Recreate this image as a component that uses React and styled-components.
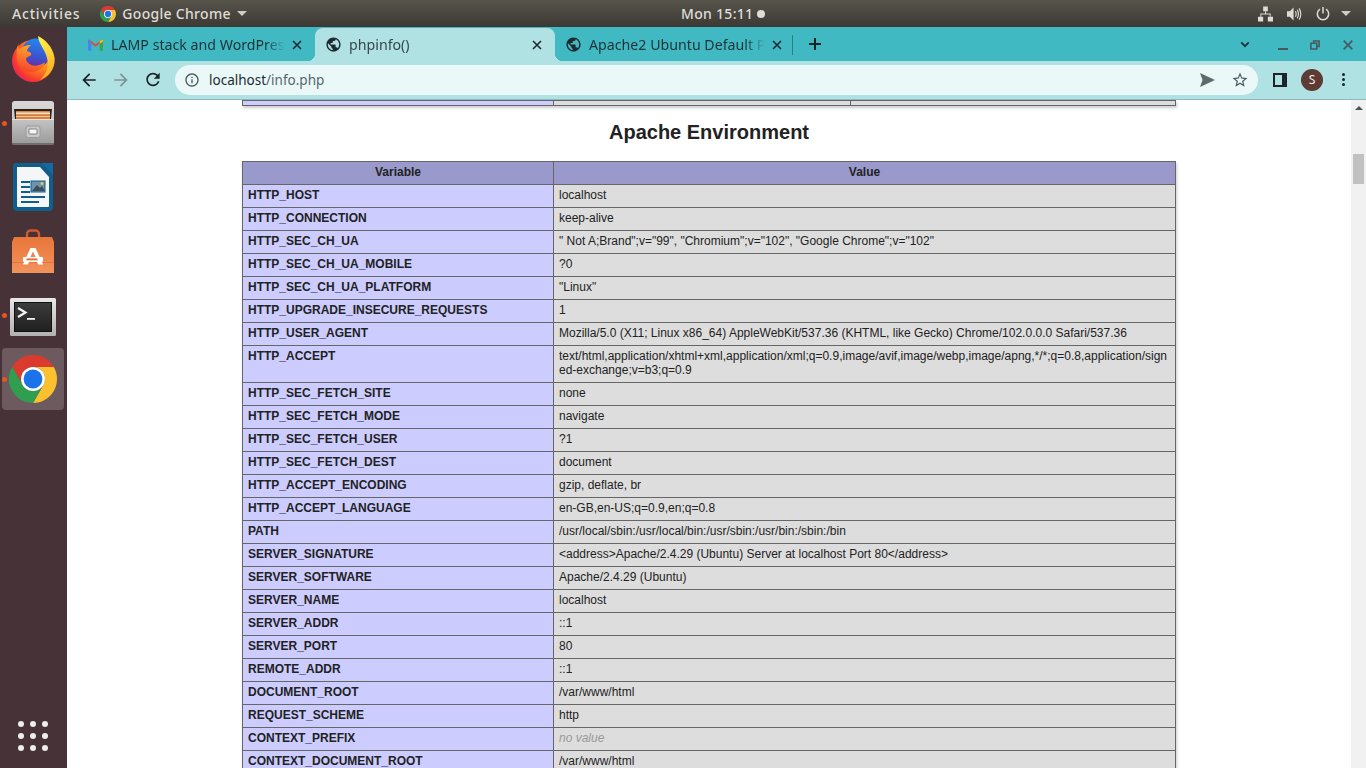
import React from 'react'
import styled, { createGlobalStyle } from 'styled-components'

const UI_FONT = '"Noto Sans", "Open Sans", sans-serif'

const rows = [
  ['HTTP_HOST', 'localhost'],
  ['HTTP_CONNECTION', 'keep-alive'],
  ['HTTP_SEC_CH_UA', '" Not A;Brand";v="99", "Chromium";v="102", "Google Chrome";v="102"'],
  ['HTTP_SEC_CH_UA_MOBILE', '?0'],
  ['HTTP_SEC_CH_UA_PLATFORM', '"Linux"'],
  ['HTTP_UPGRADE_INSECURE_REQUESTS', '1'],
  ['HTTP_USER_AGENT', 'Mozilla/5.0 (X11; Linux x86_64) AppleWebKit/537.36 (KHTML, like Gecko) Chrome/102.0.0.0 Safari/537.36'],
  ['HTTP_ACCEPT', 'text/html,application/xhtml+xml,application/xml;q=0.9,image/avif,image/webp,image/apng,*/*;q=0.8,application/signed-exchange;v=b3;q=0.9'],
  ['HTTP_SEC_FETCH_SITE', 'none'],
  ['HTTP_SEC_FETCH_MODE', 'navigate'],
  ['HTTP_SEC_FETCH_USER', '?1'],
  ['HTTP_SEC_FETCH_DEST', 'document'],
  ['HTTP_ACCEPT_ENCODING', 'gzip, deflate, br'],
  ['HTTP_ACCEPT_LANGUAGE', 'en-GB,en-US;q=0.9,en;q=0.8'],
  ['PATH', '/usr/local/sbin:/usr/local/bin:/usr/sbin:/usr/bin:/sbin:/bin'],
  ['SERVER_SIGNATURE', '<address>Apache/2.4.29 (Ubuntu) Server at localhost Port 80</address>'],
  ['SERVER_SOFTWARE', 'Apache/2.4.29 (Ubuntu)'],
  ['SERVER_NAME', 'localhost'],
  ['SERVER_ADDR', '::1'],
  ['SERVER_PORT', '80'],
  ['REMOTE_ADDR', '::1'],
  ['DOCUMENT_ROOT', '/var/www/html'],
  ['REQUEST_SCHEME', 'http'],
  ['CONTEXT_PREFIX', null],
  ['CONTEXT_DOCUMENT_ROOT', '/var/www/html'],
]

const GLOBE = 'M12 2C6.48 2 2 6.48 2 12s4.48 10 10 10 10-4.48 10-10S17.52 2 12 2zm-1 17.93c-3.95-.49-7-3.85-7-7.93 0-.62.08-1.21.21-1.79L9 15v1c0 1.1.9 2 2 2v1.93zm6.9-2.54c-.26-.81-1-1.39-1.9-1.39h-1v-3c0-.55-.45-1-1-1H8v-2h2c.55 0 1-.45 1-1V7h2c1.1 0 2-.9 2-2v-.41c2.93 1.19 5 4.06 5 7.41 0 2.08-.8 3.97-2.1 5.39z'

function Glyph({ d, size = 20, color = '#202124', flip }) {
  return (
    <svg width={size} height={size} viewBox="0 0 24 24" fill={color} style={flip ? { transform: 'scaleX(-1)' } : undefined}>
      <path d={d} />
    </svg>
  )
}

function ChromeLogo({ size }) {
  return (
    <svg width={size} height={size} viewBox="0 0 48 48">
      <path fill="#db3a2e" d="M44.78 12A24 24 0 0 0 3.2 12L13.6 30A12 12 0 0 1 24 12Z" />
      <path fill="#fbc02d" d="M44.78 12H24A12 12 0 0 1 34.4 30L24 48A24 24 0 0 0 44.78 12Z" />
      <path fill="#2f9e4f" d="M3.2 12A24 24 0 0 0 24 48L34.4 30A12 12 0 0 1 13.6 30Z" />
      <circle cx="24" cy="24" r="12" fill="#fff" />
      <circle cx="24" cy="24" r="9.4" fill="#1a73e8" />
    </svg>
  )
}

function FirefoxLogo() {
  return (
    <svg width="44" height="46" viewBox="0 0 44 46">
      <defs>
        <radialGradient id="ffBody" cx="0.72" cy="0.3" r="0.85">
          <stop offset="0" stopColor="#ffd02c" />
          <stop offset="0.45" stopColor="#ff8a1e" />
          <stop offset="0.8" stopColor="#f8382e" />
          <stop offset="1" stopColor="#e31b76" />
        </radialGradient>
        <linearGradient id="ffGlobe" x1="0.6" y1="0" x2="0.4" y2="1">
          <stop offset="0" stopColor="#1f8bf0" />
          <stop offset="0.6" stopColor="#3b55d0" />
          <stop offset="1" stopColor="#6a2aa5" />
        </linearGradient>
        <linearGradient id="ffTail" x1="0.4" y1="0" x2="0.6" y2="1">
          <stop offset="0" stopColor="#fff04a" />
          <stop offset="1" stopColor="#ffa61f" />
        </linearGradient>
        <linearGradient id="ffHead" x1="0.5" y1="0" x2="0.2" y2="1">
          <stop offset="0" stopColor="#ffb52a" />
          <stop offset="1" stopColor="#f5402c" />
        </linearGradient>
      </defs>
      <circle cx="22" cy="25" r="21" fill="url(#ffBody)" />
      <circle cx="25" cy="17" r="14.5" fill="url(#ffGlobe)" />
      <path fill="url(#ffTail)" d="M27 0C33 3 42 10 43.6 22 44.5 32 38 41 29 44 36 37 38 30 36 22 34 13 28 9 27 0Z" />
      <path fill="url(#ffHead)" d="M8 6C7 9 7 11 8 13 11 11 15 9 20 9 18 11 16 13 16 15 19 16 21 17 20 19 18 21 15 21 15 23 16 28 22 31 28 29 31 28 33 27 34 26 33 31 28 36 20 36 13 36 7 31 6 24 5 17 6 11 8 6Z" />
    </svg>
  )
}

function FilesIcon() {
  return (
    <svg width="42" height="44" viewBox="0 0 42 44">
      <defs>
        <linearGradient id="cabTop" x1="0" y1="0" x2="0" y2="1">
          <stop offset="0" stopColor="#d8d8d8" />
          <stop offset="1" stopColor="#b4b4b4" />
        </linearGradient>
        <linearGradient id="cabFront" x1="0" y1="0" x2="0" y2="1">
          <stop offset="0" stopColor="#c4c4c4" />
          <stop offset="1" stopColor="#9c9c9c" />
        </linearGradient>
      </defs>
      <rect x="0" y="0" width="42" height="43" rx="3" fill="url(#cabTop)" />
      <rect x="0" y="41" width="42" height="3" rx="1.5" fill="#6f6f6f" />
      <path fill="#26211e" d="M2 8H40L39 18H3Z" />
      <rect x="4" y="10" width="34" height="8" fill="#d8813d" />
      <rect x="4" y="11.5" width="34" height="1.6" fill="#f6e6cf" />
      <rect x="4" y="15" width="34" height="1" fill="#f2c290" />
      <rect x="0" y="18" width="42" height="24" fill="url(#cabFront)" />
      <rect x="0" y="18" width="42" height="1" fill="#e2e2e2" />
      <rect x="14" y="25" width="14" height="11.5" rx="2" fill="#c9c9c9" stroke="#9a9a9a" />
      <rect x="17" y="28" width="8" height="5" rx="0.8" fill="#f6f6f6" stroke="#5a5a5a" strokeWidth="0.7" />
    </svg>
  )
}

function WriterIcon() {
  return (
    <svg width="40" height="48" viewBox="0 0 40 48">
      <path fill="#0f5e8e" d="M3 0H28L40 12V44a4 4 0 0 1-4 4H4a4 4 0 0 1-4-4V3a3 3 0 0 1 3-3Z" />
      <path fill="#f4f6f8" d="M4 4H27L36 14V43a1 1 0 0 1-1 1H5a1 1 0 0 1-1-1Z" />
      <path fill="#116ba0" d="M28 0H40V12Z" />
      <path fill="#0f5e8e" d="M8 18h9v2H8zM8 23h9v2H8zM8 28h9v2H8zM8 33h24v2H8zM8 38h18v2H8z" />
      <rect x="18" y="18" width="14" height="11" fill="#6f93ae" stroke="#0f5e8e" />
      <path fill="#3b4e5a" d="M19 28l5-6 3 3 2-2 3 5Z" />
      <circle cx="29" cy="20.5" r="1.5" fill="#f1c84b" />
    </svg>
  )
}

function SoftwareIcon() {
  return (
    <svg width="42" height="44" viewBox="0 0 42 44">
      <defs>
        <linearGradient id="bag" x1="0" y1="0" x2="0" y2="1">
          <stop offset="0" stopColor="#e8763a" />
          <stop offset="1" stopColor="#f2935c" />
        </linearGradient>
      </defs>
      <path fill="none" stroke="#cf5a2b" strokeWidth="2.4" d="M15 13V5a3.5 3.5 0 0 1 3.5-3.5h5A3.5 3.5 0 0 1 27 5v8" />
      <path fill="url(#bag)" d="M2 8H40L42 13V44H0V13Z" />
      <path fill="#d65c2b" d="M0 33H42V34H0Z" opacity="0.45" />
      <path fill="#fff" d="M18.5 19H23.5L29.5 32H25.5L21 22.5 16.5 32H12.5Z" />
      <rect x="11" y="28" width="20" height="5" rx="1" fill="#fff" />
      <rect x="14.5" y="29.4" width="11" height="2" fill="#e8703a" />
      <path fill="#fff" d="M12 33h5l-1.2 2.5H11ZM25 33h5l1 2.5h-4.8Z" />
    </svg>
  )
}

function TerminalIcon() {
  return (
    <svg width="46" height="42" viewBox="0 0 46 42">
      <defs>
        <linearGradient id="termFrame" x1="0" y1="0" x2="0" y2="1">
          <stop offset="0" stopColor="#e8e8e8" />
          <stop offset="1" stopColor="#b0b0b0" />
        </linearGradient>
        <linearGradient id="termScreen" x1="0" y1="0" x2="0" y2="1">
          <stop offset="0" stopColor="#3c3c3c" />
          <stop offset="1" stopColor="#1f1f1f" />
        </linearGradient>
      </defs>
      <rect y="4" width="46" height="38" rx="1.5" fill="url(#termFrame)" />
      <rect x="4.5" y="8.5" width="37" height="29" fill="url(#termScreen)" stroke="#111" />
      <path d="M8 14l7.5 4.5L8 23" fill="none" stroke="#f2f2f2" strokeWidth="2.2" />
      <path fill="#f2f2f2" d="M17 24h8v1.8h-8z" />
    </svg>
  )
}

function GmailIcon() {
  return (
    <svg width="15" height="12" viewBox="0 0 16 12">
      <path fill="#4285f4" d="M0 1.2V12h3.6V4.4L1.8 0.6A1.1 1.1 0 0 0 0 1.2Z" />
      <path fill="#34a853" d="M16 1.2V12h-3.6V4.4L14.2 0.6A1.1 1.1 0 0 1 16 1.2Z" />
      <path fill="#ea4335" d="M1.2 0.2L8 5.4 14.8 0.2 12.4 4.4 8 7.8 3.6 4.4Z" />
      <path fill="#fbbc04" d="M12.4 2.1L14.4 0.4A1 1 0 0 1 16 1.2V2.2L12.4 4.9Z" />
    </svg>
  )
}

const tabs = [
  { id: 'gmail', title: 'LAMP stack and WordPress', icon: <GmailIcon /> },
  { id: 'info', title: 'phpinfo()', active: true },
  { id: 'apache', title: 'Apache2 Ubuntu Default Page: It works' },
]

const dockApps = [
  { id: 'firefox', icon: <FirefoxLogo /> },
  { id: 'files', icon: <FilesIcon />, running: true },
  { id: 'writer', icon: <WriterIcon /> },
  { id: 'software', icon: <SoftwareIcon /> },
  { id: 'terminal', icon: <TerminalIcon />, running: true },
  { id: 'chrome', icon: <ChromeLogo size={48} />, running: true, active: true },
]

export default function App() {
  return (
    <Desktop>
      <GlobalStyle />
      <TopBar>
        <TopLeft>
          <ActivitiesLabel>Activities</ActivitiesLabel>
          <AppMenu>
            <ChromeLogo size={16} />
            <TopLabel>Google Chrome</TopLabel>
            <Caret />
          </AppMenu>
        </TopLeft>
        <Clock>
          Mon 15:11
          <ClockDot />
        </Clock>
        <Tray>
          <svg width="15" height="16" viewBox="0 0 16 16" fill="#dedbd6">
            <path d="M5.5 0h5v5h-5zM0 11h5.5v5H0zM10.5 11H16v5h-5.5z" />
            <path d="M7.5 5h1v2.5h5V11h-1V8.5h-9V11h-1V7.5h5z" />
          </svg>
          <svg width="15" height="16" viewBox="0 0 16 16" fill="none" stroke="#dedbd6" strokeWidth="1.2">
            <path fill="#dedbd6" stroke="none" d="M0 5h3l4-4v14l-4-4H0z" />
            <path d="M9 5c1 2 1 4 0 6M11 3.5c1.6 3 1.6 6 0 9M13 2c2.3 4 2.3 8 0 12" />
          </svg>
          <svg width="14" height="16" viewBox="0 0 16 16" fill="none" stroke="#dedbd6" strokeWidth="1.7">
            <path d="M4.5 2.5a6.500 6.500 0 1 0 7 0M8 0v7.500" />
          </svg>
          <TrayCaret />
        </Tray>
      </TopBar>
      <Workspace>
        <Dock>
          {dockApps.map((app) => (
            <DockItem key={app.id} $active={app.active} $running={app.running}>
              {app.icon}
            </DockItem>
          ))}
          <AppGrid>
            {Array.from({ length: 9 }, (_, i) => (
              <AppDot key={i} />
            ))}
          </AppGrid>
        </Dock>
        <Browser>
          <TabStrip>
            {tabs.map((tab) => (
              <Tab key={tab.id} $active={tab.active}>
                <Favicon>{tab.icon || <Glyph d={GLOBE} size={17} color="#1f2a30" />}</Favicon>
                <TabTitle $active={tab.active}>{tab.title}</TabTitle>
                <TabClose>
                  <svg width="10" height="10" viewBox="0 0 10 10" stroke="#1f2a30" strokeWidth="1.6">
                    <path d="M1 1l8 8M9 1l-8 8" />
                  </svg>
                </TabClose>
              </Tab>
            ))}
            <TabDivider />
            <NewTab>
              <svg width="12" height="12" viewBox="0 0 12 12" stroke="#1b2226" strokeWidth="2">
                <path d="M6 0v12M0 6h12" />
              </svg>
            </NewTab>
            <WindowControls>
              <svg width="10" height="7" viewBox="0 0 12 8" fill="none" stroke="#1f3036" strokeWidth="2.2">
                <path d="M1.5 1.5L6 6l4.5-4.5" />
              </svg>
              <MinimizeButton />
              <svg width="10" height="10" viewBox="0 0 11 11" fill="none" stroke="#47585e" strokeWidth="1.7">
                <path d="M4 3V1h6v6H8" />
                <path d="M1 3.5h6.5V10H1z" />
              </svg>
              <svg width="10" height="10" viewBox="0 0 11 11" stroke="#47585e" strokeWidth="1.8">
                <path d="M.7.7l9.6 9.6M10.3.7L.7 10.3" />
              </svg>
            </WindowControls>
          </TabStrip>
          <Toolbar>
            <NavButton>
              <Glyph d="M20 11H7.83l5.59-5.59L12 4l-8 8 8 8 1.41-1.41L7.83 13H20v-2z" size={20} />
            </NavButton>
            <NavButton>
              <Glyph d="M20 11H7.83l5.59-5.59L12 4l-8 8 8 8 1.41-1.41L7.83 13H20v-2z" size={20} color="#7f9296" flip />
            </NavButton>
            <NavButton>
              <Glyph d="M17.65 6.35C16.2 4.9 14.21 4 12 4c-4.42 0-7.99 3.58-7.99 8s3.57 8 7.99 8c3.73 0 6.84-2.55 7.73-6h-2.08c-.82 2.33-3.04 4-5.65 4-3.31 0-6-2.69-6-6s2.69-6 6-6c1.66 0 3.14.69 4.22 1.78L13 11h7V4l-2.35 2.35z" size={21} />
            </NavButton>
            <Omnibox>
              <Glyph d="M11 7h2v2h-2zm0 4h2v6h-2zm1-9C6.48 2 2 6.48 2 12s4.48 10 10 10 10-4.48 10-10S17.52 2 12 2zm0 18c-4.41 0-8-3.59-8-8s3.59-8 8-8 8 3.59 8 8-3.59 8-8 8z" size={16} color="#4a5a60" />
              <Url>
                localhost<UrlPath>/info.php</UrlPath>
              </Url>
              <OmniActions>
                <svg width="15" height="14" viewBox="0 0 15 14" fill="#5f6a6e">
                  <path d="M0 0l15 7-15 7 2.5-7z" />
                </svg>
                <Glyph d="M22 9.24l-7.19-.62L12 2 9.19 8.63 2 9.24l5.46 4.73L5.82 21 12 17.27 18.18 21l-1.63-7.03L22 9.24zM12 15.4l-3.76 2.27 1-4.28-3.32-2.88 4.38-.38L12 6.1l1.71 4.04 4.38.38-3.32 2.88 1 4.28L12 15.4z" size={18} color="#4a5a60" />
              </OmniActions>
            </Omnibox>
            <ToolbarEnd>
              <SidePanel />
              <Avatar>S</Avatar>
              <MenuDots>
                <i />
                <i />
                <i />
              </MenuDots>
            </ToolbarEnd>
          </Toolbar>
          <Viewport>
            <Page>
              <InfoTable>
                <colgroup>
                  <col width="311" />
                  <col width="297" />
                  <col width="325" />
                </colgroup>
                <tbody>
                  <tr>
                    <KeyCell $stub />
                    <ValueCell $stub />
                    <ValueCell $stub />
                  </tr>
                </tbody>
              </InfoTable>
              <SectionTitle>Apache Environment</SectionTitle>
              <InfoTable>
                <colgroup>
                  <col width="311" />
                  <col width="622" />
                </colgroup>
                <thead>
                  <tr>
                    <HeadCell>Variable</HeadCell>
                    <HeadCell>Value</HeadCell>
                  </tr>
                </thead>
                <tbody>
                  {rows.map(([name, value]) => (
                    <tr key={name}>
                      <KeyCell>{name}</KeyCell>
                      <ValueCell>{value === null ? <NoValue>no value</NoValue> : value}</ValueCell>
                    </tr>
                  ))}
                </tbody>
              </InfoTable>
            </Page>
            <Scrollbar>
              <ScrollArrow />
              <ScrollThumb />
            </Scrollbar>
          </Viewport>
        </Browser>
      </Workspace>
    </Desktop>
  )
}

const GlobalStyle = createGlobalStyle`
  html, body {
    margin: 0;
    height: 100%;
    overflow: hidden;
    background: #fff;
  }
`

const Desktop = styled.div`
  display: flex;
  flex-direction: column;
  width: 1366px;
  height: 768px;
  overflow: hidden;
  font-family: ${UI_FONT};
`

const TopBar = styled.header`
  display: flex;
  align-items: center;
  justify-content: space-between;
  position: relative;
  height: 27px;
  flex: none;
  padding: 0 15px 0 12px;
  box-sizing: border-box;
  background: linear-gradient(#57544c, #3c3934);
  color: #dfdcd7;
  font-size: 14px;
  font-weight: 500;
`

const TopLeft = styled.div`
  display: flex;
  align-items: center;
  gap: 20px;
`

const TopLabel = styled.span`
  letter-spacing: 0.3px;
`

const ActivitiesLabel = styled.span`
  letter-spacing: 0.8px;
`

const AppMenu = styled.div`
  display: flex;
  align-items: center;
  gap: 6px;
`

const Caret = styled.span`
  width: 0;
  height: 0;
  border-left: 5px solid transparent;
  border-right: 5px solid transparent;
  border-top: 5px solid #cfccc7;
`

const TrayCaret = styled(Caret)`
  margin-left: -3px;
`

const Clock = styled.div`
  display: flex;
  align-items: center;
  gap: 4px;
  position: absolute;
  left: 681px;
  letter-spacing: 0.3px;
`

const ClockDot = styled.span`
  width: 8px;
  height: 8px;
  border-radius: 50%;
  background: #dfdcd7;
`

const Tray = styled.div`
  display: flex;
  align-items: center;
  gap: 14px;
`

const Workspace = styled.div`
  display: flex;
  flex: 1;
  min-height: 0;
`

const Dock = styled.nav`
  display: flex;
  flex-direction: column;
  width: 67px;
  flex: none;
  padding: 1px 0 0 2px;
  box-sizing: border-box;
  background: #463237;
`

const DockItem = styled.div`
  display: flex;
  align-items: center;
  justify-content: center;
  position: relative;
  width: 62px;
  height: 62px;
  margin-bottom: 2px;
  border-radius: 4px;
  background: ${(p) => (p.$active ? '#6d5a5e' : 'transparent')};

  &::before {
    content: '';
    display: ${(p) => (p.$running ? 'block' : 'none')};
    position: absolute;
    left: 0;
    top: 29px;
    width: 5px;
    height: 5px;
    border-radius: 50%;
    background: #e95420;
  }
`

const AppGrid = styled.div`
  display: grid;
  grid-template-columns: repeat(3, 6px);
  gap: 6px;
  margin: auto 0 17px 16px;
`

const AppDot = styled.span`
  width: 6px;
  height: 6px;
  border-radius: 50%;
  background: #eeeeec;
`

const Browser = styled.main`
  display: flex;
  flex-direction: column;
  flex: 1;
  min-width: 0;
`

const TabStrip = styled.div`
  display: flex;
  align-items: flex-end;
  height: 34px;
  flex: none;
  padding-left: 10px;
  box-sizing: border-box;
  background: #41b9c2;
`

const Tab = styled.div`
  display: flex;
  align-items: center;
  position: relative;
  width: 240px;
  height: 33px;
  flex: none;
  padding: 0 10px;
  box-sizing: border-box;
  border-radius: 8px 8px 0 0;
  background: ${(p) => (p.$active ? '#b0e2e4' : 'transparent')};

  &:first-child {
    width: 238px;
  }

  &::before,
  &::after {
    content: '';
    display: ${(p) => (p.$active ? 'block' : 'none')};
    position: absolute;
    bottom: 0;
    width: 8px;
    height: 8px;
  }

  &::before {
    left: -8px;
    background: radial-gradient(circle at 0 0, transparent 8px, #b0e2e4 8.5px);
  }

  &::after {
    right: -8px;
    background: radial-gradient(circle at 100% 0, transparent 8px, #b0e2e4 8.5px);
  }
`

const Favicon = styled.span`
  display: flex;
  align-items: center;
  justify-content: center;
  width: 17px;
  flex: none;
  margin-right: 7px;
`

const TabTitle = styled.span`
  flex: 1;
  min-width: 0;
  overflow: hidden;
  white-space: nowrap;
  font-size: 14.2px;
  color: ${(p) => (p.$active ? '#36474d' : '#1f3238')};
  mask-image: linear-gradient(to right, #000 calc(100% - 20px), transparent);
`

const TabClose = styled.span`
  display: flex;
  align-items: center;
  justify-content: center;
  width: 16px;
  flex: none;
  margin-left: 4px;
`

const TabDivider = styled.span`
  width: 1px;
  height: 20px;
  margin: 0 0 6px -3px;
  background: #2a7f87;
`

const NewTab = styled.span`
  display: flex;
  margin: 0 0 11px 16px;
`

const WindowControls = styled.div`
  display: flex;
  align-items: center;
  gap: 23px;
  height: 33px;
  margin-left: auto;
  padding-right: 13px;
`

const MinimizeButton = styled.span`
  width: 10px;
  height: 2px;
  margin: 9px -1px 0 5px;
  background: #47585e;
`

const Toolbar = styled.div`
  display: flex;
  align-items: center;
  height: 39px;
  flex: none;
  padding: 0 0 1px 12px;
  box-sizing: border-box;
  background: #b0e2e4;
  border-bottom: 1px solid #8fb9bb;
`

const NavButton = styled.span`
  display: flex;
  align-items: center;
  justify-content: center;
  width: 20px;
  margin-right: 12px;
`

const Omnibox = styled.div`
  display: flex;
  align-items: center;
  width: 1083px;
  height: 30px;
  padding: 0 9px;
  box-sizing: border-box;
  border-radius: 15px;
  background: #ebf8f8;
`

const Url = styled.span`
  margin-left: 9px;
  font-size: 13.5px;
  color: #202c30;
`

const UrlPath = styled.span`
  color: #56676d;
`

const OmniActions = styled.div`
  display: flex;
  align-items: center;
  gap: 16px;
  margin-left: auto;
`

const ToolbarEnd = styled.div`
  display: flex;
  align-items: center;
  margin-left: 15px;
`

const SidePanel = styled.span`
  width: 7px;
  height: 10px;
  border: solid #1f2428;
  border-width: 2px 5px 2px 2px;
`

const Avatar = styled.span`
  display: flex;
  align-items: center;
  justify-content: center;
  width: 22px;
  height: 22px;
  margin-left: 14px;
  border-radius: 50%;
  background: #5d3a33;
  color: #f3ecea;
  font-size: 12px;
`

const MenuDots = styled.span`
  display: flex;
  flex-direction: column;
  gap: 2px;
  margin-left: 19px;

  i {
    width: 3px;
    height: 3px;
    border-radius: 50%;
    background: #1f2428;
  }
`

const Viewport = styled.div`
  display: flex;
  flex: 1;
  min-height: 0;
  overflow: hidden;
  background: #fff;
`

const Page = styled.div`
  flex: 1;
  min-width: 0;
  font-family: "Liberation Sans", Arial, sans-serif;
  font-size: 12px;
  color: #222;
`

const InfoTable = styled.table`
  width: 933px;
  margin: 0 auto;
  border-collapse: collapse;
  table-layout: fixed;
  box-shadow: 1px 2px 3px #ccc;
`

const SectionTitle = styled.h2`
  margin: 15px 0 17px;
  text-align: center;
  font-size: 20px;
  line-height: 23px;
  font-weight: bold;
  color: #222;
`

const cellBase = `
  border: 1px solid #666;
  vertical-align: baseline;
  word-break: break-word;
  overflow-wrap: anywhere;
`

const HeadCell = styled.th`
  ${cellBase}
  padding: 3px 5px 5px;
  background: #99c;
  font-size: 12px;
  font-weight: bold;
  text-align: center;
`

const KeyCell = styled.td`
  ${cellBase}
  padding: ${(p) => (p.$stub ? '0' : '3px 5px 5px')};
  height: ${(p) => (p.$stub ? '4px' : 'auto')};
  background: #ccf;
  font-weight: bold;
`

const ValueCell = styled.td`
  ${cellBase}
  padding: ${(p) => (p.$stub ? '0' : '3px 5px 5px')};
  height: ${(p) => (p.$stub ? '4px' : 'auto')};
  background: #ddd;
`

const NoValue = styled.i`
  color: #999;
`

const Scrollbar = styled.aside`
  display: flex;
  flex-direction: column;
  align-items: center;
  width: 15px;
  flex: none;
  background: #f1f1f1;
`

const ScrollArrow = styled.span`
  width: 0;
  height: 0;
  margin-top: 6px;
  border-left: 4px solid transparent;
  border-right: 4px solid transparent;
  border-bottom: 4px solid #505050;
`

const ScrollThumb = styled.span`
  width: 11px;
  height: 30px;
  margin-top: 44px;
  background: #c1c1c1;
`
